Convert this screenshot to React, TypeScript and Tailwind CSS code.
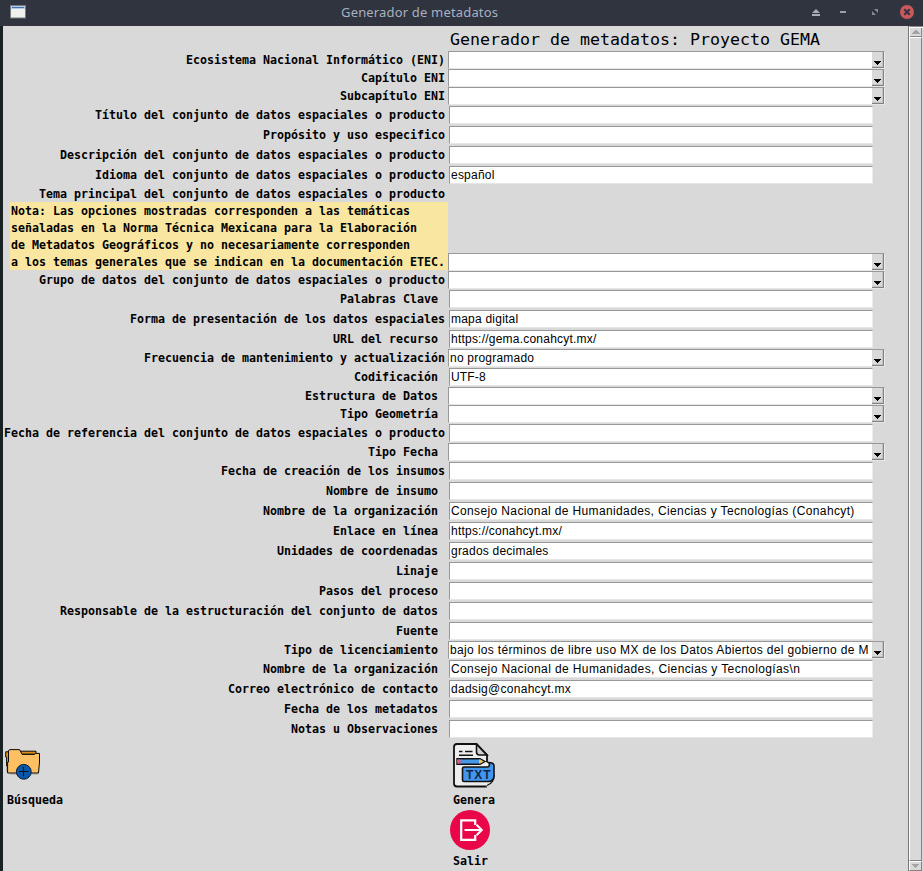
type Row = { label: string; kind: 'entry' | 'combo'; value?: string; inset?: boolean; spacing?: string };

const topRows: Row[] = [
  { label: 'Ecosistema Nacional Informático (ENI)', kind: 'combo' },
  { label: 'Capítulo ENI', kind: 'combo' },
  { label: 'Subcapítulo ENI', kind: 'combo' },
  { label: 'Título del conjunto de datos espaciales o producto', kind: 'entry' },
  { label: 'Propósito y uso especifico', kind: 'entry' },
  { label: 'Descripción del conjunto de datos espaciales o producto', kind: 'entry' },
  { label: 'Idioma del conjunto de datos espaciales o producto', kind: 'entry', value: 'español' },
];

const bottomRows: Row[] = [
  { label: 'Grupo de datos del conjunto de datos espaciales o producto', kind: 'combo' },
  { label: 'Palabras Clave', kind: 'entry', inset: true },
  { label: 'Forma de presentación de los datos espaciales', kind: 'entry', value: 'mapa digital' },
  { label: 'URL del recurso', kind: 'entry', value: 'https://gema.conahcyt.mx/', inset: true },
  { label: 'Frecuencia de mantenimiento y actualización', kind: 'combo', value: 'no programado' },
  { label: 'Codificación', kind: 'entry', value: 'UTF-8', inset: true, spacing: 'tracking-[0.14px]' },
  { label: 'Estructura de Datos', kind: 'combo', inset: true },
  { label: 'Tipo Geometría', kind: 'combo', inset: true },
  { label: 'Fecha de referencia del conjunto de datos espaciales o producto', kind: 'entry' },
  { label: 'Tipo Fecha', kind: 'combo', inset: true },
  { label: 'Fecha de creación de los insumos', kind: 'entry' },
  { label: 'Nombre de insumo', kind: 'entry', inset: true },
  { label: 'Nombre de la organización', kind: 'entry', value: 'Consejo Nacional de Humanidades, Ciencias y Tecnologías (Conahcyt)', inset: true, spacing: 'tracking-[0.37px]' },
  { label: 'Enlace en línea', kind: 'entry', value: 'https://conahcyt.mx/', inset: true },
  { label: 'Unidades de coordenadas', kind: 'entry', value: 'grados decimales', inset: true },
  { label: 'Linaje', kind: 'entry', inset: true },
  { label: 'Pasos del proceso', kind: 'entry', inset: true },
  { label: 'Responsable de la estructuración del conjunto de datos', kind: 'entry', inset: true },
  { label: 'Fuente', kind: 'entry', inset: true },
  { label: 'Tipo de licenciamiento', kind: 'combo', value: 'bajo los términos de libre uso MX de los Datos Abiertos del gobierno de M', inset: true, spacing: 'tracking-[0.345px]' },
  { label: 'Nombre de la organización', kind: 'entry', value: 'Consejo Nacional de Humanidades, Ciencias y Tecnologías\\n', inset: true, spacing: 'tracking-[0.385px]' },
  { label: 'Correo electrónico de contacto', kind: 'entry', value: 'dadsig@conahcyt.mx', inset: true, spacing: 'tracking-[0.28px]' },
  { label: 'Fecha de los metadatos', kind: 'entry', inset: true },
  { label: 'Notas u Observaciones', kind: 'entry', inset: true },
];

const mono = "font-['DejaVu_Sans_Mono',monospace] text-[11.63px] font-bold whitespace-pre";
const fieldText = "font-['Liberation_Sans',sans-serif] text-[12px] leading-[16px] whitespace-pre overflow-hidden";
const defaultSpacing = 'tracking-[0.22px]';

function Combo({ value, spacing = defaultSpacing }: { value?: string; spacing?: string }) {
  return (
    <div className="flex h-[18px] w-[437px] border border-t-[#989898] border-l-[#989898] border-r-[#ececec] border-b-[#e6e6e6] bg-white">
      <div className={`${fieldText} w-[423px] pl-px ${spacing}`}>{value}</div>
      <div className="h-4 w-3 border-r border-b border-[#828282] bg-[#d9d9d9] shadow-[inset_-1px_-1px_0_#c3c3c3]">
        <svg width="11" height="15" shapeRendering="crispEdges">
          <path d="M2 9h7v1h-1v1h-1v1h-1v1h-1v-1h-1v-1h-1v-1h-1z" fill="#000" />
        </svg>
      </div>
    </div>
  );
}

function Entry({ value, spacing = defaultSpacing }: { value?: string; spacing?: string }) {
  return (
    <div className="ml-px h-[18px] w-[424px] border border-t-[#989898] border-l-[#989898] border-r-[#ececec] border-b-[#e6e6e6] bg-white">
      <div className={`${fieldText} pl-px ${spacing}`}>{value}</div>
    </div>
  );
}

function FormRow({ row }: { row: Row }) {
  return (
    <div className={`flex items-center ${row.kind === 'combo' ? 'h-[18px]' : 'h-5'}`}>
      <div className={`${mono} flex w-[445px] justify-end leading-[18px] ${row.inset ? 'pr-[10px]' : 'pr-[3px]'}`}>{row.label}</div>
      {row.kind === 'combo' ? <Combo value={row.value} spacing={row.spacing} /> : <Entry value={row.value} spacing={row.spacing} />}
    </div>
  );
}

function FolderIcon() {
  return (
    <svg width="37" height="33" viewBox="0 0 37 33" className="block">
      <path d="M4 24.500h29l1 1.500H6z" fill="#aaa" opacity=".6" />
      <path d="M.7 2.800h8v20H2.300V17H1.600V8H.7z" fill="#ef9207" stroke="#0a0a0a" strokeWidth="1" />
      <path d="M15 2.200h16v3H15z" fill="#dd8b15" stroke="#0a0a0a" />
      <path d="M3.500 13V1.500L5 .6h9.500l2.700 4.800h12.500l1-1h3.800v8.600l-1 11H2.600V13z" fill="#ffc064" stroke="#0a0a0a" strokeWidth="1" />
      <circle cx="18.800" cy="22.800" r="7.400" fill="#0859ab" stroke="#061c34" />
      <path d="M14 22.500h9.500M18.500 18v9.500" stroke="#071422" strokeWidth="1.200" />
    </svg>
  );
}

function TxtIcon() {
  return (
    <svg width="43" height="45" viewBox="0 0 43 45" className="block">
      <path d="M4 1h20l10 11v7l7 2v13c0 5-4 9-9 9H4c-2 0-3-1-3-3V4c0-2 1-3 3-3z" fill="#eee" />
      <path d="M23.500 1v8c0 2 1 3 3 3H34z" fill="#cfcfcf" stroke="#111" strokeWidth="1.600" />
      <path d="M34 43.500H4c-2 0-3-1-3-3V4c0-2 1-3 3-3h19.500L34 12v7" fill="none" stroke="#111" strokeWidth="1.800" />
      <path d="M34.500 38.500c0 3-1 5-2.500 5 6 0 9.500-3.500 9.500-9V24z" fill="#dedede" />
      <path d="M35.500 19.500c1.500 1 1.200 4.500-1 4.500H11c-1 0-1.500.5-1.500 1.500v11.500c0 1 .5 1.500 1.500 1.500h23.500c4.500 0 6.500-2 6.500-5.500V23c0-2.500-2-3.500-5.500-3.500z" fill="#4296ee" stroke="#111" strokeWidth="1.600" />
      <path d="M41 32c0 6-2.500 9-7 10.500" fill="none" stroke="#111" strokeWidth="1.200" />
      <path d="M6 8.500h3.500M12 8.500h7.500M6 12.300h14" stroke="#111" strokeWidth="1.600" />
      <path d="M4 15.800h23l5 2.700-5 2.700H4z" fill="#4798e9" stroke="#111" strokeWidth="1.400" />
      <path d="M4.200 16.500h3.300v4H4.200z" fill="#f0566b" />
      <path d="M26 16.500h1.500l3 2-3 2H26z" fill="#efc34b" />
      <text x="13" y="35.500" fontFamily="Liberation Sans, sans-serif" fontSize="12" fontWeight="700" textLength="24.500" lengthAdjust="spacing" fill="#132744">TXT</text>
    </svg>
  );
}

function ExitIcon() {
  return (
    <svg width="40" height="40" viewBox="0 0 40 40" className="block">
      <circle cx="20" cy="20" r="20" fill="#e90649" />
      <path d="M25.200 15v-4.700H11.200v19.500h14V25" fill="none" stroke="#fff" strokeWidth="2.200" />
      <path d="M14.500 20h17M26.500 14.800l5.300 5.200-5.300 5.200" fill="none" stroke="#fff" strokeWidth="2" />
    </svg>
  );
}

function Scrollbar() {
  return (
    <div className="ml-auto flex h-[845px] w-[15px] flex-col border-l border-[#777] bg-[#d9d9d9]">
      <div className="flex h-[11px] border-t border-l border-white border-t-[#888]">
        <svg width="13" height="10" shapeRendering="crispEdges">
          <path d="M0 0h13v1H0z" fill="#fff" />
          <path d="M2 7h8L7 3H5z" fill="#a3a3a3" />
          <path d="M0 9h11V1h1v9H0z" fill="#888" />
        </svg>
      </div>
      <div className="mr-px grow border border-t-white border-r-[#828282] border-b-[#828282] border-l-white" />
      <div className="mr-px h-[10px] border border-t-white border-r-[#828282] border-b-[#828282] border-l-white">
        <svg width="11" height="8" shapeRendering="crispEdges">
          <path d="M1 2h8L6 6H5z" fill="#a3a3a3" />
        </svg>
      </div>
    </div>
  );
}

export default function App() {
  return (
    <div className="h-[871px] w-[923px] overflow-hidden bg-[#d9d9d9] text-black">
      <header className="flex h-[26px] items-start border-b border-[#373440] bg-[#2f343f]">
        <svg width="16" height="14" className="mt-[5px] ml-[10px]">
          <rect x=".5" y=".5" width="15" height="12.500" fill="#f0f0ec" stroke="#777b82" />
          <path d="M1 1h14v3H1z" fill="#b5c9e9" />
          <path d="M2 2h12v1H2z" fill="#4770ac" />
        </svg>
        <div className="ml-[315px] font-['Noto_Sans',sans-serif] text-[13px] leading-[25px] tracking-[0.17px] whitespace-pre text-[#a9b0c0]">Generador de metadatos</div>
        <svg width="110" height="25" className="mr-[8px] ml-auto">
          <path d="M7 13l4-4 4 4zM7 14h8v2H7z" fill="#a9adba" />
          <path d="M35 11h6v2h-6z" fill="#9a9eab" />
          <path d="M69 9h4v4zM67 11v4h4z" fill="#858a97" />
          <circle cx="102" cy="12" r="7" fill="#cc575d" />
          <path d="M99.300 9.300l5.400 5.400M104.700 9.300l-5.400 5.400" stroke="#2f343f" strokeWidth="2" />
        </svg>
      </header>
      <main className="flex h-[845px] border-l-[3px] border-[#182124]">
        <div className="w-[890px]">
          <h1 className="h-[25px] pl-[447px] font-['DejaVu_Sans_Mono',monospace] text-[16.610px] leading-[28px] whitespace-pre">Generador de metadatos: Proyecto GEMA</h1>
          {topRows.map((row) => <FormRow key={row.label} row={row} />)}
          <div className="flex h-[86px] items-end">
            <div className="w-[445px]">
              <div className={`${mono} flex h-[17px] justify-end pr-[3px] leading-[19px]`}>Tema principal del conjunto de datos espaciales o producto</div>
              <div className={`${mono} mb-px ml-[7px] h-[68px] bg-[#f9e6a0] pt-px pl-px leading-[17px]`}>
                {'Nota: Las opciones mostradas corresponden a las temáticas\nseñaladas en la Norma Técnica Mexicana para la Elaboración\nde Metadatos Geográficos y no necesariamente corresponden\na los temas generales que se indican en la documentación ETEC.'}
              </div>
            </div>
            <Combo />
          </div>
          {bottomRows.map((row, i) => <FormRow key={i} row={row} />)}
          <div className="flex pt-[4px]">
            <div className="w-[445px] pt-[6px] pl-[2px]">
              <FolderIcon />
              <div className={`${mono} mt-[9px] pl-[2px] leading-[18px]`}>Búsqueda</div>
            </div>
            <div>
              <div className="pl-[5px]"><TxtIcon /></div>
              <div className={`${mono} mt-[3px] pl-[5px] leading-[18px]`}>Genera</div>
              <div className="mt-px pl-[2px]"><ExitIcon /></div>
              <div className={`${mono} mt-[2px] pl-[5px] leading-[18px]`}>Salir</div>
            </div>
          </div>
        </div>
        <Scrollbar />
      </main>
    </div>
  );
}
